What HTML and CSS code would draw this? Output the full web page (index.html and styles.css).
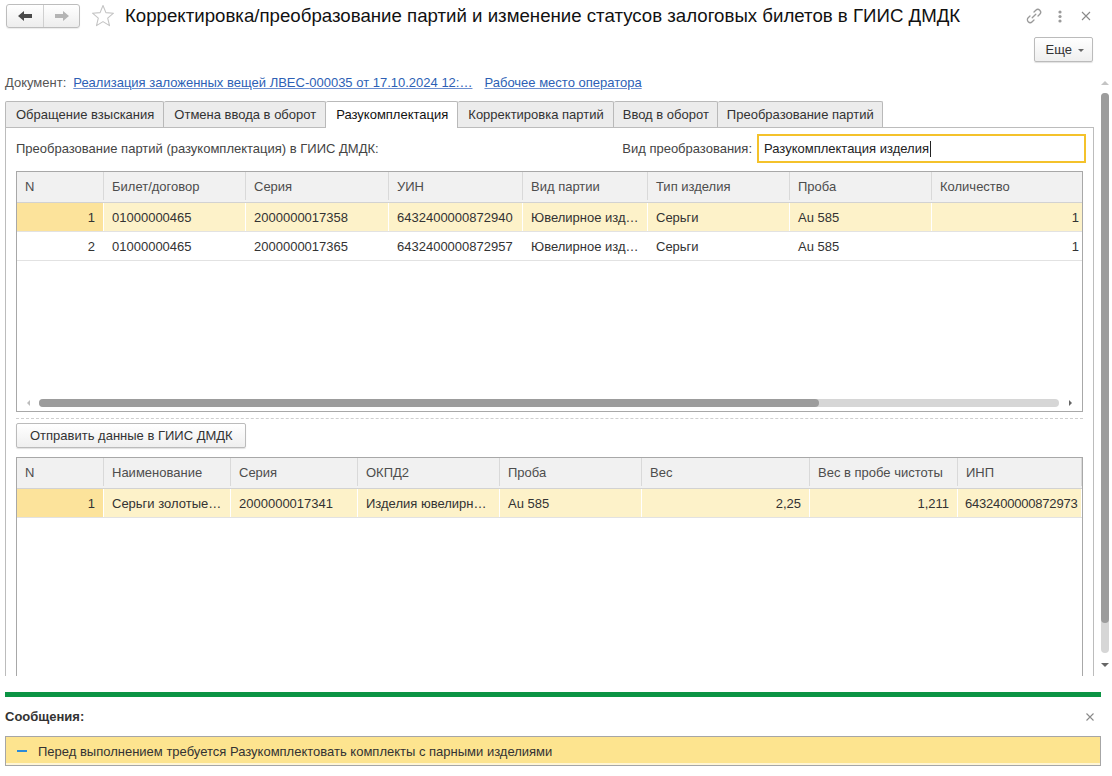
FILE: index.html
```html
<!DOCTYPE html>
<html lang="ru">
<head>
<meta charset="utf-8">
<title>Корректировка/преобразование партий</title>
<link rel="stylesheet" href="styles.css">
</head>
<body>
<div class="app">
  <div class="titlebar">
    <div class="navgroup">
      <span class="navbtn">
        <svg width="14" height="10" viewBox="0 0 14 10"><path d="M0 5 L6 0 V3 H14 V7 H6 V10 Z" fill="#4a4a4a"/></svg>
      </span>
      <span class="navbtn">
        <svg width="14" height="10" viewBox="0 0 14 10"><path d="M14 5 L8 0 V3 H0 V7 H8 V10 Z" fill="#b4b4b4"/></svg>
      </span>
    </div>
    <svg class="star" width="24" height="24" viewBox="0 0 24 24"><polygon points="12,1.5 14.9,8.6 22.5,9.2 16.7,14.1 18.5,21.6 12,17.6 5.5,21.6 7.3,14.1 1.5,9.2 9.1,8.6" fill="none" stroke="#c4c4c4" stroke-width="1.1" stroke-linejoin="round"/></svg>
    <h1 class="title">Корректировка/преобразование партий и изменение статусов залоговых билетов в ГИИС ДМДК</h1>
    <div class="wintools">
      <svg width="18" height="18" viewBox="0 0 18 18" fill="none" stroke="#9a9a9a" stroke-width="1.3" stroke-linecap="round"><path d="M7.2 10.8 L10.8 7.2"/><path d="M9 5 L10.8 3.2 a2.8 2.8 0 0 1 4 4 L13 9"/><path d="M9 13 L7.2 14.8 a2.8 2.8 0 0 1 -4 -4 L5 9"/></svg>
      <svg width="6" height="18" viewBox="0 0 6 18" fill="#9a9a9a"><circle cx="3" cy="5" r="1.6"/><circle cx="3" cy="9.5" r="1.6"/><circle cx="3" cy="14" r="1.6"/></svg>
      <svg width="12" height="12" viewBox="0 0 12 12" stroke="#8a8a8a" stroke-width="1.1"><path d="M2 2 L10 10 M10 2 L2 10"/></svg>
    </div>
  </div>

  <div class="cmdbar">
    <span class="more">Еще <span class="caret"></span></span>
  </div>

  <div class="workarea">
    <div class="content">
      <div class="docline">
        <span class="doclabel">Документ:</span>
        <a class="link" href="#">Реализация заложенных вещей ЛВЕС-000035 от 17.10.2024 12:…</a>
        <a class="link" href="#">Рабочее место оператора</a>
      </div>

      <div class="tabs">
        <span class="tab">Обращение взыскания</span>
        <span class="tab">Отмена ввода в оборот</span>
        <span class="tab active">Разукомплектация</span>
        <span class="tab">Корректировка партий</span>
        <span class="tab">Ввод в оборот</span>
        <span class="tab">Преобразование партий</span>
      </div>

      <div class="panel">
        <div class="toprow">
          <span class="caption">Преобразование партий (разукомплектация) в ГИИС ДМДК:</span>
          <div class="field">
            <span class="fieldlabel">Вид преобразования:</span>
            <div class="input">Разукомплектация изделия<span class="cursor"></span></div>
          </div>
        </div>

        <div class="table t1">
          <div class="row head">
            <div class="cell">N</div>
            <div class="cell">Билет/договор</div>
            <div class="cell">Серия</div>
            <div class="cell">УИН</div>
            <div class="cell">Вид партии</div>
            <div class="cell">Тип изделия</div>
            <div class="cell">Проба</div>
            <div class="cell">Количество</div>
          </div>
          <div class="row sel">
            <div class="cell num ncell">1</div>
            <div class="cell">01000000465</div>
            <div class="cell">2000000017358</div>
            <div class="cell">6432400000872940</div>
            <div class="cell">Ювелирное изд…</div>
            <div class="cell">Серьги</div>
            <div class="cell">Au 585</div>
            <div class="cell num">1</div>
          </div>
          <div class="row">
            <div class="cell num">2</div>
            <div class="cell">01000000465</div>
            <div class="cell">2000000017365</div>
            <div class="cell">6432400000872957</div>
            <div class="cell">Ювелирное изд…</div>
            <div class="cell">Серьги</div>
            <div class="cell">Au 585</div>
            <div class="cell num">1</div>
          </div>
          <div class="hscroll">
            <span class="arr-l"></span>
            <div class="htrack"><div class="hthumb"></div></div>
            <span class="arr-r"></span>
          </div>
        </div>

        <div class="dashsep"></div>

        <span class="btn">Отправить данные в ГИИС ДМДК</span>

        <div class="table t2">
          <div class="row head">
            <div class="cell">N</div>
            <div class="cell">Наименование</div>
            <div class="cell">Серия</div>
            <div class="cell">ОКПД2</div>
            <div class="cell">Проба</div>
            <div class="cell">Вес</div>
            <div class="cell">Вес в пробе чистоты</div>
            <div class="cell">ИНП</div>
          </div>
          <div class="row sel">
            <div class="cell num ncell">1</div>
            <div class="cell">Серьги золотые…</div>
            <div class="cell">2000000017341</div>
            <div class="cell">Изделия ювелирн…</div>
            <div class="cell">Au 585</div>
            <div class="cell num">2,25</div>
            <div class="cell num">1,211</div>
            <div class="cell tight">6432400000872973</div>
          </div>
        </div>
      </div>
    </div>

    <div class="vscroll">
      <span class="varr-up"></span>
      <div class="vtrack"><div class="vthumb"></div></div>
      <span class="varr-down"></span>
    </div>
  </div>

  <div class="messages">
    <div class="greenline"></div>
    <div class="msghead">
      <span class="msgtitle">Сообщения:</span>
      <svg width="10" height="10" viewBox="0 0 10 10" stroke="#8a8a8a" stroke-width="1.1"><path d="M1.5 1.5 L8.5 8.5 M8.5 1.5 L1.5 8.5"/></svg>
    </div>
    <div class="msgbar">
      <span class="msgdash"></span>
      <span class="msgtext">Перед выполнением требуется Разукомплектовать комплекты с парными изделиями</span>
    </div>
  </div>
</div>
</body>
</html>
```

FILE: styles.css
```css
* { box-sizing: border-box; }

html, body {
  margin: 0;
  padding: 0;
  background: #fff;
}

body {
  font-family: "Liberation Sans", Arial, sans-serif;
  font-size: 13px;
  color: #333;
}

.app {
  width: 1112px;
  height: 776px;
  overflow: hidden;
  display: flex;
  flex-direction: column;
}

/* title bar */
.titlebar {
  height: 30px;
  display: flex;
  align-items: center;
  padding-left: 6px;
  padding-top: 1px;
}

.navgroup {
  display: flex;
  height: 24px;
  border: 1px solid #bdbdbd;
  border-radius: 3px;
  background: linear-gradient(#ffffff, #ededed);
  box-shadow: 0 1px 1px rgba(0,0,0,0.08);
}

.navbtn {
  width: 36px;
  display: flex;
  align-items: center;
  justify-content: center;
}

.navbtn + .navbtn {
  border-left: 1px solid #d0d0d0;
}

.star {
  margin-left: 11px;
  flex: none;
}

.title {
  margin: 0 0 0 10px;
  font-size: 18.67px;
  font-weight: normal;
  color: #111;
  white-space: nowrap;
  flex: 1;
}

.wintools {
  display: flex;
  align-items: center;
  margin-right: 20px;
}

.wintools svg:nth-child(1) { margin-right: 14px; }
.wintools svg:nth-child(2) { margin-right: 17px; }

/* command bar */
.cmdbar {
  height: 38px;
  display: flex;
  justify-content: flex-end;
  align-items: flex-start;
  padding-top: 7px;
  padding-right: 19px;
}

.more {
  height: 25px;
  width: 59px;
  border: 1px solid #bbbbbb;
  border-radius: 2px;
  background: linear-gradient(#ffffff, #efefef);
  box-shadow: 0 1px 1px rgba(0,0,0,0.12);
  display: flex;
  align-items: center;
  justify-content: flex-end;
  padding-right: 8px;
  gap: 6px;
  color: #333;
}

.caret {
  width: 0;
  height: 0;
  border-left: 3px solid transparent;
  border-right: 3px solid transparent;
  border-top: 3px solid #666;
  margin-top: 1px;
}

/* work area */
.workarea {
  height: 608px;
  display: flex;
  overflow: hidden;
}

.content {
  width: 1095px;
  padding-left: 5px;
  overflow: hidden;
}

.docline {
  height: 28px;
  line-height: 29px;
  white-space: nowrap;
  display: flex;
  gap: 7px;
}

.doclabel { color: #555; }

.link {
  color: #2d5fb5;
  text-decoration: underline;
  text-decoration-color: #6d8fd0;
}

.link + .link { margin-left: 5px; }

/* tabs */
.tabs {
  margin-top: 5px;
  display: flex;
  height: 26px;
  position: relative;
  z-index: 1;
}

.tab {
  height: 26px;
  line-height: 25px;
  padding: 0 9px 0 10px;
  background: #ececec;
  border: 1px solid #b9b9b9;
  border-bottom: none;
  border-radius: 2px 2px 0 0;
  color: #333;
  white-space: nowrap;
}

.tab:nth-child(5), .tab:nth-child(6) { padding: 0 8px 0 9px; }

.tab + .tab { border-left: none; }

.tab.active {
  background: #fff;
  height: 27px;
  color: #111;
}

.panel {
  border: 1px solid #bcbcbc;
  width: 1089px;
  height: 560px;
  padding: 0 10px;
}

.toprow {
  display: flex;
  justify-content: space-between;
  align-items: center;
  margin-top: 6px;
  margin-right: -3px;
  height: 29px;
}

.caption { color: #444; }

.field {
  display: flex;
  align-items: center;
  gap: 5px;
}

.fieldlabel { color: #444; }

.input {
  width: 329px;
  height: 29px;
  border: 2px solid #f4c22b;
  padding-left: 5px;
  display: flex;
  align-items: center;
  color: #222;
}

.cursor {
  display: inline-block;
  width: 1px;
  height: 16px;
  background: #222;
  margin-left: 1px;
}

/* tables */
.table {
  border: 1px solid #a8a8a8;
  margin-top: 8px;
  overflow: hidden;
  width: 1067px;
}

.t1 {
  height: 241px;
  display: flex;
  flex-direction: column;
}

.t2 {
  margin-top: 9px;
  height: 260px;
}

.row {
  display: grid;
  height: 29px;
  border-bottom: 1px solid #e2e2e2;
  align-items: stretch;
}

.t1 .row { grid-template-columns: 87px 142px 143px 134px 125px 142px 142px 156px; }
.t2 .row { grid-template-columns: 87px 127px 127px 142px 142px 168px 148px 124px; }

.row.head {
  height: 31px;
  background: #f1f1f1;
  border-bottom: 1px solid #d2d2d2;
  padding-bottom: 2px;
}

.cell {
  padding: 0 7px 0 8px;
  display: flex;
  align-items: center;
  white-space: nowrap;
  overflow: hidden;
  border-right: 1px solid #fff;
  color: #333;
}

.cell.tight {
  padding: 0 2px 0 7px;
  letter-spacing: -0.2px;
}

.head .cell {
  color: #4d4d4d;
  border-right: 1px solid #d9d9d9;
}

.cell.num {
  justify-content: flex-end;
  padding-right: 8px;
}

.row.sel { background: #fdf2c9; }
.row.sel .ncell { background: #fce39b; }

.hscroll {
  margin-top: auto;
  height: 13px;
  display: flex;
  align-items: center;
  padding: 0 10px 4px 10px;
}

.arr-l {
  width: 0;
  height: 0;
  border-top: 3px solid transparent;
  border-bottom: 3px solid transparent;
  border-right: 3px solid #bdbdbd;
}

.arr-r {
  width: 0;
  height: 0;
  border-top: 3px solid transparent;
  border-bottom: 3px solid transparent;
  border-left: 3px solid #666;
  margin-left: 10px;
}

.htrack {
  flex: 1;
  height: 8px;
  margin-left: 9px;
  background: #d6d6d6;
  border-radius: 4px;
}

.hthumb {
  width: 780px;
  height: 8px;
  background: #9c9c9c;
  border-radius: 4px;
}

.dashsep {
  margin-top: 6px;
  width: 1067px;
  border-top: 1px dashed #cfcfcf;
}

.btn {
  margin-top: 4px;
  display: inline-flex;
  align-items: center;
  height: 25px;
  padding: 0 12px 0 13px;
  border: 1px solid #bbbbbb;
  border-radius: 2px;
  background: linear-gradient(#ffffff, #efefef);
  box-shadow: 0 1px 1px rgba(0,0,0,0.12);
  color: #333;
}

/* page scrollbar */
.vscroll {
  width: 17px;
  display: flex;
  flex-direction: column;
  align-items: flex-start;
  padding-left: 6px;
  padding-top: 13px;
}

.varr-up {
  width: 0;
  height: 0;
  border-left: 4px solid transparent;
  border-right: 4px solid transparent;
  border-bottom: 4px solid #c4c4c4;
}

.vtrack {
  margin-top: 8px;
  width: 8px;
  height: 560px;
  background: #d6d6d6;
  border-radius: 4px;
}

.vthumb {
  width: 8px;
  height: 530px;
  background: #9c9c9c;
  border-radius: 4px;
}

.varr-down {
  margin-top: 10px;
  width: 0;
  height: 0;
  border-left: 4px solid transparent;
  border-right: 4px solid transparent;
  border-top: 4px solid #666;
}

/* messages */
.messages {
  padding: 0 11px 0 5px;
}

.greenline {
  margin-top: 16px;
  height: 5px;
  background: #0b9444;
}

.msghead {
  height: 39px;
  display: flex;
  align-items: center;
  justify-content: space-between;
  padding-right: 6px;
}

.msgtitle {
  font-weight: bold;
  color: #333;
}

.msgbar {
  height: 30px;
  border: 1px solid #a6a6a6;
  background: #fde48f;
  box-shadow: inset 0 -2px 0 #fff6d6;
  display: flex;
  align-items: center;
  padding-left: 11px;
}

.msgdash {
  width: 10px;
  height: 2px;
  background: #2b8ad8;
  margin-right: 11px;
}

.msgtext { color: #333; }
```
